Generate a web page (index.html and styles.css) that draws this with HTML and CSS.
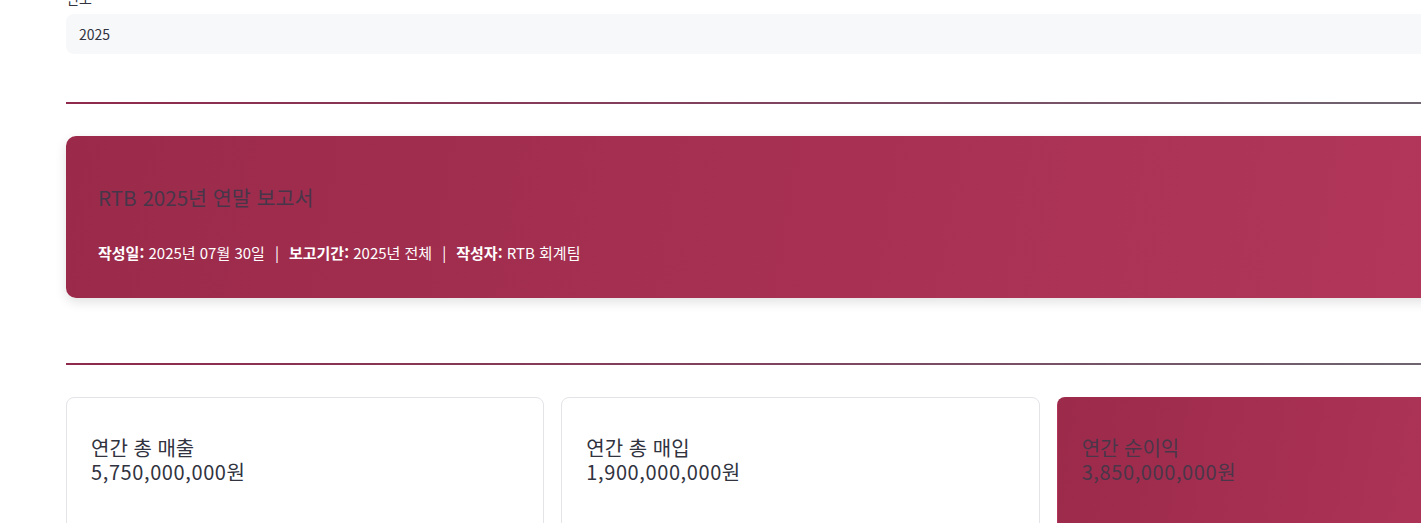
FILE: index.html
```html
<!DOCTYPE html>
<html lang="ko">
<head>
<meta charset="utf-8">
<title>RTB 연말 보고서</title>
<link rel="stylesheet" href="styles.css">
</head>
<body>
<main class="main">
  <div class="field">
    <label class="field-label">연도</label>
    <div class="field-input">2025</div>
  </div>
  <div class="rule"></div>
  <section class="report-header">
    <h2 class="report-title">RTB 2025년 연말 보고서</h2>
    <p class="report-meta"><b>작성일:</b> 2025년 07월 30일<span class="sep">|</span><b>보고기간:</b> 2025년 전체<span class="sep">|</span><b>작성자:</b> RTB 회계팀</p>
  </section>
  <div class="rule rule-2"></div>
  <section class="metrics">
    <div class="metric">
      <div class="metric-label">연간 총 매출</div>
      <div class="metric-value">5,750,000,000원</div>
    </div>
    <div class="metric">
      <div class="metric-label">연간 총 매입</div>
      <div class="metric-value">1,900,000,000원</div>
    </div>
    <div class="metric metric-accent">
      <div class="metric-label">연간 순이익</div>
      <div class="metric-value">3,850,000,000원</div>
    </div>
  </section>
</main>
</body>
</html>
```
FILE: styles.css
```css
html, body {
  margin: 0;
  padding: 0;
  background: #ffffff;
  overflow: hidden;
  height: 523px;
}
body {
  font-family: "Noto Sans CJK KR", "Noto Sans", sans-serif;
  color: #31333f;
}
.main {
  width: 1469px;
  padding-left: 66px;
  margin-top: -14px;
}
.field {
  display: flex;
  flex-direction: column;
}
.field-label {
  font-size: 14px;
  line-height: 24px;
  height: 24px;
  margin-bottom: 4px;
  color: #31333f;
}
.field-input {
  height: 40px;
  box-sizing: border-box;
  background: #f7f8fa;
  border-radius: 8px;
  padding: 0 13px;
  font-size: 14px;
  line-height: 40px;
  color: #31333f;
}
.rule {
  height: 2px;
  margin-top: 48px;
  background: linear-gradient(90deg, #8f2a4c 0%, #7f4560 50%, #6a6a72 100%);
}
.report-header {
  margin-top: 32px;
  height: 162px;
  box-sizing: border-box;
  padding: 32px 32px 0 32px;
  border-radius: 10px;
  background: linear-gradient(100deg, #9b2a4a 0%, #b3375a 100%);
  box-shadow: 0 4px 12px rgba(0, 0, 0, 0.12);
}
.report-title {
  margin: 0;
  padding-top: 17px;
  font-size: 20.6px;
  line-height: 24px;
  font-weight: 400;
  color: #47364a;
}
.report-meta {
  margin: 33px 0 0 0;
  font-size: 15px;
  line-height: 21px;
  color: #ffffff;
}
.report-meta b {
  font-weight: 700;
}
.sep {
  margin: 0 10px;
}
.rule-2 {
  margin-top: 65px;
}
.metrics {
  margin-top: 32px;
  display: grid;
  grid-template-columns: 1fr 1fr 1fr;
  gap: 17px;
}
.metric {
  border: 1px solid #e4e4e8;
  border-radius: 8px;
  background: #ffffff;
  padding: 38px 24px 60px;
}
.metric-accent {
  border-color: transparent;
  background: linear-gradient(100deg, #9c2a4a 0%, #b1365a 100%);
  color: #4a3649;
}
.metric-label,
.metric-value {
  font-size: 20px;
  line-height: 24px;
  font-weight: 400;
}
.metric-value {
  letter-spacing: 0.6px;
}
```
